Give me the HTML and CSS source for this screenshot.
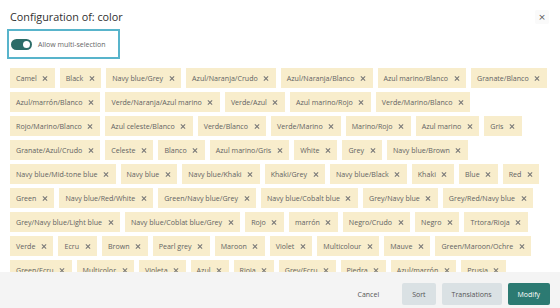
FILE: index.html
```html
<!DOCTYPE html>
<html>
<head>
<meta charset="utf-8">
<link rel="stylesheet" href="styles.css">
</head>
<body>
<div class="modal">
  <div class="modal-header">
    <h1 class="modal-title">Configuration of: color</h1>
    <button class="modal-close" aria-label="Close">&times;</button>
  </div>
  <div class="modal-body">
    <label class="multi-toggle">
      <span class="switch"><span class="knob"></span></span>
      <span class="switch-label">Allow multi-selection</span>
    </label>
    <div class="tags">
      <div class="tag-row">
        <span class="tag">Camel<i class="x"></i></span>
        <span class="tag">Black<i class="x"></i></span>
        <span class="tag">Navy blue/Grey<i class="x"></i></span>
        <span class="tag">Azul/Naranja/Crudo<i class="x"></i></span>
        <span class="tag">Azul/Naranja/Blanco<i class="x"></i></span>
        <span class="tag">Azul marino/Blanco<i class="x"></i></span>
        <span class="tag">Granate/Blanco<i class="x"></i></span>
      </div>
      <div class="tag-row">
        <span class="tag">Azul/marrón/Blanco<i class="x"></i></span>
        <span class="tag">Verde/Naranja/Azul marino<i class="x"></i></span>
        <span class="tag">Verde/Azul<i class="x"></i></span>
        <span class="tag">Azul marino/Rojo<i class="x"></i></span>
        <span class="tag">Verde/Marino/Blanco<i class="x"></i></span>
      </div>
      <div class="tag-row">
        <span class="tag">Rojo/Marino/Blanco<i class="x"></i></span>
        <span class="tag">Azul celeste/Blanco<i class="x"></i></span>
        <span class="tag">Verde/Blanco<i class="x"></i></span>
        <span class="tag">Verde/Marino<i class="x"></i></span>
        <span class="tag">Marino/Rojo<i class="x"></i></span>
        <span class="tag">Azul marino<i class="x"></i></span>
        <span class="tag">Gris<i class="x"></i></span>
      </div>
      <div class="tag-row">
        <span class="tag">Granate/Azul/Crudo<i class="x"></i></span>
        <span class="tag">Celeste<i class="x"></i></span>
        <span class="tag">Blanco<i class="x"></i></span>
        <span class="tag">Azul marino/Gris<i class="x"></i></span>
        <span class="tag">White<i class="x"></i></span>
        <span class="tag">Grey<i class="x"></i></span>
        <span class="tag">Navy blue/Brown<i class="x"></i></span>
      </div>
      <div class="tag-row">
        <span class="tag">Navy blue/Mid-tone blue<i class="x"></i></span>
        <span class="tag">Navy blue<i class="x"></i></span>
        <span class="tag">Navy blue/Khaki<i class="x"></i></span>
        <span class="tag">Khaki/Grey<i class="x"></i></span>
        <span class="tag">Navy blue/Black<i class="x"></i></span>
        <span class="tag">Khaki<i class="x"></i></span>
        <span class="tag">Blue<i class="x"></i></span>
        <span class="tag">Red<i class="x"></i></span>
      </div>
      <div class="tag-row">
        <span class="tag">Green<i class="x"></i></span>
        <span class="tag">Navy blue/Red/White<i class="x"></i></span>
        <span class="tag">Green/Navy blue/Grey<i class="x"></i></span>
        <span class="tag">Navy blue/Cobalt blue<i class="x"></i></span>
        <span class="tag">Grey/Navy blue<i class="x"></i></span>
        <span class="tag">Grey/Red/Navy blue<i class="x"></i></span>
      </div>
      <div class="tag-row">
        <span class="tag">Grey/Navy blue/Light blue<i class="x"></i></span>
        <span class="tag">Navy blue/Coblat blue/Grey<i class="x"></i></span>
        <span class="tag">Rojo<i class="x"></i></span>
        <span class="tag">marrón<i class="x"></i></span>
        <span class="tag">Negro/Crudo<i class="x"></i></span>
        <span class="tag">Negro<i class="x"></i></span>
        <span class="tag">Trtora/Rioja<i class="x"></i></span>
      </div>
      <div class="tag-row">
        <span class="tag">Verde<i class="x"></i></span>
        <span class="tag">Ecru<i class="x"></i></span>
        <span class="tag">Brown<i class="x"></i></span>
        <span class="tag">Pearl grey<i class="x"></i></span>
        <span class="tag">Maroon<i class="x"></i></span>
        <span class="tag">Violet<i class="x"></i></span>
        <span class="tag">Multicolour<i class="x"></i></span>
        <span class="tag">Mauve<i class="x"></i></span>
        <span class="tag">Green/Maroon/Ochre<i class="x"></i></span>
      </div>
      <div class="tag-row">
        <span class="tag">Green/Ecru<i class="x"></i></span>
        <span class="tag">Multicolor<i class="x"></i></span>
        <span class="tag">Violeta<i class="x"></i></span>
        <span class="tag">Azul<i class="x"></i></span>
        <span class="tag">Rioja<i class="x"></i></span>
        <span class="tag">Grey/Ecru<i class="x"></i></span>
        <span class="tag">Piedra<i class="x"></i></span>
        <span class="tag">Azul/marrón<i class="x"></i></span>
        <span class="tag">Prusia<i class="x"></i></span>
      </div>
    </div>
  </div>
  <div class="modal-footer">
    <button class="btn btn-link">Cancel</button>
    <button class="btn btn-light">Sort</button>
    <button class="btn btn-light">Translations</button>
    <button class="btn btn-primary">Modify</button>
  </div>
</div>
</body>
</html>
```

FILE: styles.css
```css
* { box-sizing: border-box; }
html, body { margin: 0; padding: 0; }
body {
  font-family: "Open Sans", Lato, sans-serif;
  color: #333;
  background: #fff;
  width: 560px;
  height: 308px;
  overflow: hidden;
}
.modal {
  height: 308px;
  display: flex;
  flex-direction: column;
}
.modal-header {
  display: flex;
  justify-content: space-between;
  align-items: flex-start;
  padding: 10px 10px 0 10px;
}
.modal-title {
  margin: 0;
  font-size: 10.8px;
  line-height: 14px;
  font-weight: 400;
  color: #2f2f2f;
}
.modal-close {
  border: 0;
  background: #fafafa;
  color: #555;
  font-family: "DejaVu Sans", sans-serif;
  font-size: 9px;
  line-height: 12px;
  width: 14px;
  height: 14px;
  padding: 0;
  margin: 0 1px 0 0;
  border-radius: 2px;
}
.modal-body {
  flex: 1;
  overflow: hidden;
  padding: 0 10px;
}
.multi-toggle {
  display: inline-flex;
  align-items: center;
  gap: 6px;
  margin-top: 5px;
  width: 113px;
  height: 30px;
  padding: 0 0 0 2px;
  border: 2px solid #58b4cb;
  margin-left: -3px;
}
.switch {
  position: relative;
  width: 21px;
  height: 11px;
  border-radius: 6px;
  background: #2c6c68;
}
.knob {
  position: absolute;
  right: 2px;
  top: 2px;
  width: 7px;
  height: 7px;
  border-radius: 50%;
  background: #fff;
}
.switch-label {
  font-size: 7px;
  color: #666;
}
.tags {
  display: flex;
  flex-direction: column;
  gap: 4px;
  margin-top: 9px;
}
.tag-row {
  display: flex;
  gap: 5px;
}
.tag {
  display: inline-flex;
  align-items: center;
  height: 20px;
  padding: 0 7px 0 6px;
  background: #f8edcc;
  color: #636363;
  font-size: 7.1px;
  white-space: nowrap;
}
.x {
  position: relative;
  display: inline-block;
  width: 5px;
  height: 5px;
  margin-left: 6px;
}
.x::before, .x::after {
  content: "";
  position: absolute;
  left: -0.5px;
  top: 2px;
  width: 6px;
  height: 1px;
  background: #777;
  transform: rotate(45deg);
}
.x::after { transform: rotate(-45deg); }
.modal-footer {
  height: 36px;
  flex: 0 0 36px;
  background: #f4f4f4;
  display: flex;
  justify-content: flex-end;
  align-items: flex-start;
  gap: 6px;
  padding: 11px 10px 0 0;
}
.btn {
  font-family: "Open Sans", Lato, sans-serif;
  font-size: 7px;
  height: 22px;
  border: 0;
  border-radius: 2px;
  padding: 0 10px;
  cursor: pointer;
}
.btn-link {
  background: transparent;
  color: #555;
  padding: 0 17px 0 0;
}
.btn-light {
  background: #dae1e4;
  color: #555;
}
.btn-primary {
  background: #2c7a72;
  color: #fff;
}
```
